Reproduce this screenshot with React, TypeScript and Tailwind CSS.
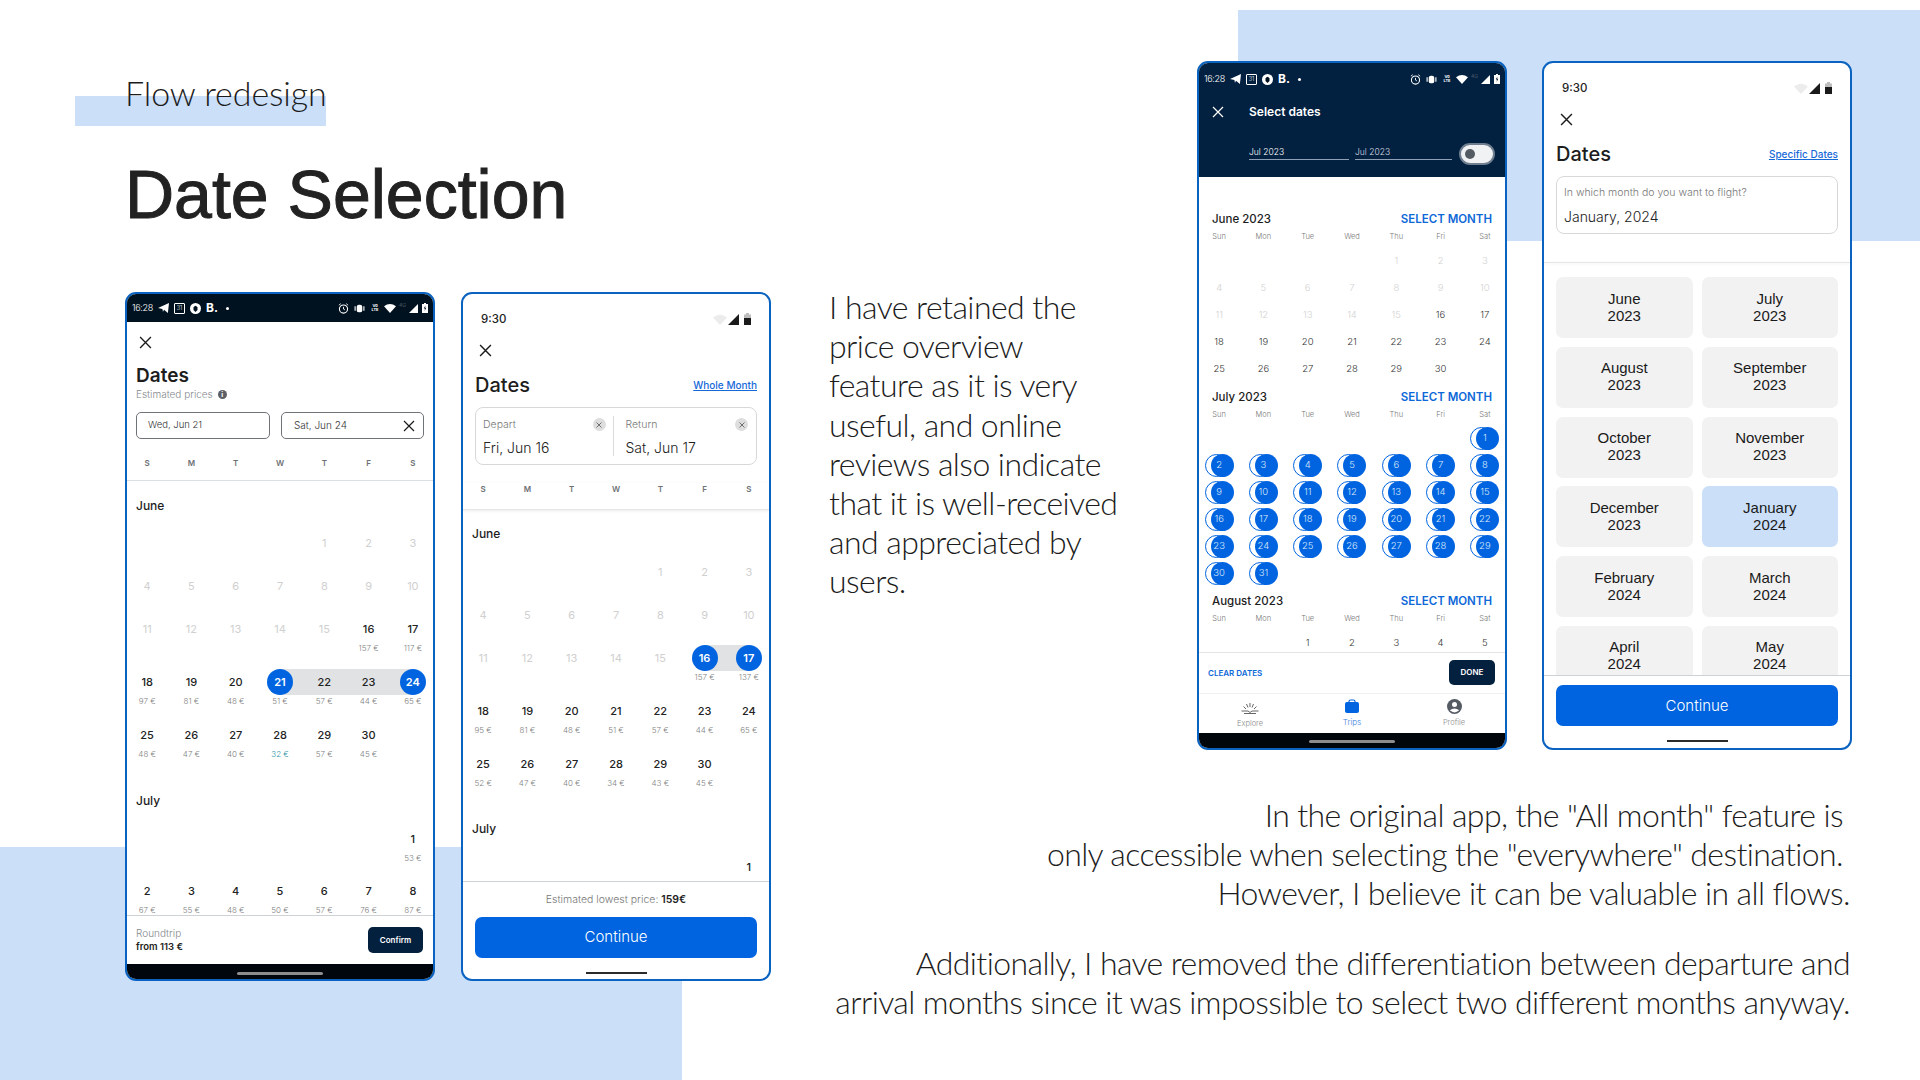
import React from "react";

type Cell = { d: number; p?: string; s?: "start" | "mid" | "end"; teal?: boolean; off?: boolean } | null;

const W1 = ["S", "M", "T", "W", "T", "F", "S"];
const W3 = ["Sun", "Mon", "Tue", "Wed", "Thu", "Fri", "Sat"];

function X({ size = 12, color = "#1a1a1a", sw = 1.3 }: { size?: number; color?: string; sw?: number }) {
  return (
    <svg width={size} height={size} viewBox="0 0 12 12" fill="none">
      <path d="M1 1L11 11M11 1L1 11" stroke={color} strokeWidth={sw} />
    </svg>
  );
}

function DarkStatus() {
  return (
    <div className="flex items-center justify-between pl-[5px] pr-[5px] h-full text-white">
      <div className="flex items-center">
        <span className="text-[9px] w-[22px] tracking-[-0.3px] whitespace-nowrap">16:28</span>
        <svg width="11" height="10" viewBox="0 0 10 9" className="ml-[4px]"><path d="M0 4.5L10 0L9 9L5.5 6L4.5 8L4 5.5Z" fill="white" /></svg>
        <div className="ml-[5px] w-[11px] h-[11px] border border-white rounded-[1px] text-[5.5px] leading-[9px] text-center">31</div>
        <svg width="11" height="11" viewBox="0 0 11 11" className="ml-[5px]"><circle cx="5.5" cy="5.5" r="5.5" fill="white" /><path d="M3.5 4.5Q5.5 1 7.5 4.5V7L5.5 9L3.5 7Z" fill="#00121f" /></svg>
        <span className="ml-[5px] text-[12px] font-bold leading-none">B.</span>
        <span className="ml-[8px] w-[3px] h-[3px] rounded-full bg-white" />
      </div>
      <div className="flex items-center">
        <svg width="11" height="11" viewBox="0 0 10 10" fill="none"><circle cx="5" cy="5.5" r="3.7" stroke="white" strokeWidth="1" /><path d="M5 3.5V5.5L6.3 6.3M0.8 2L2.5 0.6M9.2 2L7.5 0.6" stroke="white" strokeWidth="0.8" /></svg>
        <svg width="11" height="9" viewBox="0 0 10 8" className="ml-[5px]"><rect x="2.5" y="0.5" width="5" height="7" rx="2" fill="white" /><path d="M1 2V6M9 2V6" stroke="white" strokeWidth="1" /></svg>
        <div className="ml-[5px] w-[10px] text-[4px] leading-[4px] font-bold text-center">Vo<br />LTE</div>
        <svg width="12" height="10" viewBox="0 0 11 9" className="ml-[4px]"><path d="M0 3Q5.5-1.5 11 3L5.5 9Z" fill="white" /></svg>
        <span className="ml-[3px] w-[8px] text-[5px] text-[#6d7680] leading-none -mt-[5px]">4G</span>
        <svg width="9" height="9" viewBox="0 0 9 9" className="ml-[2px]"><path d="M9 0V9H0Z" fill="white" /></svg>
        <svg width="6" height="10" viewBox="0 0 6 10" className="ml-[4px]"><path d="M2 0H4V1H6V10H0V1H2Z" fill="white" /><path d="M3.4 2.5L1.8 5.5H3L2.6 8L4.3 4.8H3.1Z" fill="#00121f" /></svg>
      </div>
    </div>
  );
}

function LightStatus() {
  return (
    <div className="h-[46px] pt-[16px] pl-[18px] pr-[18px] flex items-start justify-between">
      <span className="text-[11.5px] leading-[18px] font-medium text-[#222]">9:30</span>
      <div className="flex items-center mt-[3px]">
        <svg width="14" height="11" viewBox="0 0 14 11"><path d="M0 3.5Q7-2 14 3.5L7 11Z" fill="#ececec" /></svg>
        <svg width="11" height="11" viewBox="0 0 11 11" className="ml-[1px]"><path d="M11 0V11H0Z" fill="#1a1a1a" /></svg>
        <svg width="7" height="12" viewBox="0 0 7 12" className="ml-[5px]"><path d="M2 0H5V1.5H7V5H0V1.5H2Z" fill="#bdbdbd" /><rect y="5" width="7" height="7" fill="#1a1a1a" /></svg>
      </div>
    </div>
  );
}

function LightHeader({ link, children }: { link: string; children: React.ReactNode }) {
  return (
    <div>
      <LightStatus />
      <div className="h-[20px] pl-[16px] flex items-center"><X size={13} sw={1.3} /></div>
      <div className="mt-[13px] px-[12px] flex items-center justify-between h-[24px]">
        <span className="text-[20px] font-medium text-[#1d1d1d]">Dates</span>
        <span className="text-[10px] font-medium text-[#1769d8] underline whitespace-nowrap">{link}</span>
      </div>
      <div className="mt-[10px] mx-[12px] h-[58px] border border-[#d8d8d8] rounded-[8px] flex">{children}</div>
    </div>
  );
}

function ClearDot() {
  return (
    <span className="w-[13px] h-[13px] rounded-full bg-[#dedede] flex items-center justify-center"><X size={6} color="#555" sw={1.6} /></span>
  );
}

function Weekdays({ labels, cls }: { labels: string[]; cls: string }) {
  return (
    <div className={`-mx-[2px] grid grid-cols-7 text-center ${cls}`}>
      {labels.map((l, i) => <span key={i}>{l}</span>)}
    </div>
  );
}

function Row({ cells, h }: { cells: Cell[]; h: string }) {
  return (
    <div className={`-mx-[2px] grid grid-cols-7 ${h}`}>
      {cells.map((c, i) => (
        <div key={i} className="flex flex-col items-center">
          {c && (
            <>
              <div className="relative w-full h-[20px] flex items-center justify-center">
                {c.s && (
                  <span className={`absolute -top-[3px] h-[26px] bg-[#e0e2e4] ${c.s === "start" ? "left-1/2 right-0" : c.s === "end" ? "left-0 right-1/2" : "left-0 right-0"}`} />
                )}
                {(c.s === "start" || c.s === "end") && (
                  <span className="absolute left-1/2 top-1/2 -translate-x-1/2 -translate-y-1/2 w-[26px] h-[26px] rounded-full bg-[#0064e0]" />
                )}
                <span className={`relative text-[11px] font-medium ${c.off ? "text-[#d0d0d0] font-normal" : c.s === "start" || c.s === "end" ? "text-white font-semibold" : "text-[#222]"}`}>{c.d}</span>
              </div>
              {c.p && <span className={`mt-[3px] h-[12px] leading-[12px] text-[8px] whitespace-nowrap ${c.teal ? "text-[#2c93a8]" : "text-[#7f7f7f]"}`}>{c.p}</span>}
            </>
          )}
        </div>
      ))}
    </div>
  );
}

const off = (a: (number | null)[]): Cell[] => a.map((d) => (d == null ? null : { d, off: true }));
const priced = (start: number, prices: (number | null)[], tealIdx = -1): Cell[] =>
  prices.map((p, i) => (p == null ? null : { d: start + i, p: `${p} €`, teal: i === tealIdx }));

function Phone({ children }: { children: React.ReactNode }) {
  return (
    <div className="w-[310px] h-[689px] shrink-0 bg-white border-2 border-[#0b63c1] rounded-[11px] overflow-hidden flex flex-col font-['Inter',sans-serif]">
      {children}
    </div>
  );
}

function PhoneOne() {
  const r3: Cell[] = [...off([11, 12, 13, 14, 15]), { d: 16, p: "157 €" }, { d: 17, p: "117 €" }];
  const r4 = priced(18, [97, 81, 48, 51, 57, 44, 65]);
  r4[3]!.s = "start"; r4[4]!.s = "mid"; r4[5]!.s = "mid"; r4[6]!.s = "end";
  return (
    <Phone>
      <div className="h-[28px] shrink-0 bg-[#00121f]"><DarkStatus /></div>
      <div className="flex-1 min-h-0 overflow-hidden">
        <div className="mt-[10px] h-[20px] pl-[12px] flex items-center"><X size={13} sw={1.2} /></div>
        <div className="mt-[12px] pl-[9px] h-[24px] leading-[24px] text-[19px] font-semibold text-[#1d1d1d]">Dates</div>
        <div className="pl-[9px] h-[12px] leading-[12px] text-[10px] text-[#85898d] flex items-center">
          Estimated prices
          <span className="ml-[5px] w-[9px] h-[9px] rounded-full bg-[#5c6066] text-white text-[7px] leading-[9px] text-center font-bold">i</span>
        </div>
        <div className="mt-[12px] px-[9px] flex gap-[11px]">
          <div className="flex-1 h-[27px] border border-[#6f7378] rounded-[5px] pl-[11px] flex items-center text-[9.5px] text-[#333]">Wed, Jun 21</div>
          <div className="flex-1 h-[27px] border border-[#6f7378] rounded-[5px] pl-[12px] pr-[8px] flex items-center justify-between text-[10px] text-[#333]">Sat, Jun 24<X size={12} sw={1.2} /></div>
        </div>
        <div className="mt-[18px] pb-[11px] border-b border-[#dcdfe2]">
          <Weekdays labels={W1} cls="h-[12px] leading-[12px] text-[8px] font-semibold text-[#6e7276]" />
        </div>
        <div className="mt-[17px] mb-[19px] pl-[9px] h-[16px] leading-[16px] text-[12px] font-medium text-[#1d1d1d]">June</div>
        <Row h="h-[43px]" cells={off([null, null, null, null, 1, 2, 3])} />
        <Row h="h-[43px]" cells={off([4, 5, 6, 7, 8, 9, 10])} />
        <Row h="h-[53px]" cells={r3} />
        <Row h="h-[53px]" cells={r4} />
        <Row h="h-[53px]" cells={priced(25, [48, 47, 40, 32, 57, 45, null], 3)} />
        <div className="mt-[15px] mb-[20px] pl-[9px] h-[16px] leading-[16px] text-[12px] font-medium text-[#1d1d1d]">July</div>
        <Row h="h-[52px]" cells={[null, null, null, null, null, null, { d: 1, p: "53 €" }]} />
        <Row h="h-[53px]" cells={priced(2, [67, 55, 48, 50, 57, 76, 87])} />
      </div>
      <div className="h-[49px] shrink-0 border-t border-[#cfd2d5] pl-[9px] pr-[10px] flex items-center justify-between">
        <div className="leading-[13px]">
          <div className="text-[10px] text-[#85898d]">Roundtrip</div>
          <div className="text-[9.5px] font-semibold text-[#222]">from 113 €</div>
        </div>
        <div className="w-[55px] h-[26px] bg-[#03213f] rounded-[5px] text-white text-[8px] font-semibold flex items-center justify-center">Confirm</div>
      </div>
      <div className="h-[15px] shrink-0 bg-[#00060c] flex items-center justify-center"><span className="w-[86px] h-[3px] rounded-full bg-[#8d8d8d] mt-[3px]" /></div>
    </Phone>
  );
}

function PhoneTwo() {
  const r3: Cell[] = [...off([11, 12, 13, 14, 15]), { d: 16, p: "157 €", s: "start" }, { d: 17, p: "137 €", s: "end" }];
  return (
    <Phone>
      <LightHeader link="Whole Month">
        <div className="flex-1 pl-[7px] pr-[7px] pt-[9px]">
          <div className="flex items-center justify-between text-[10.5px] text-[#777]">Depart<ClearDot /></div>
          <div className="mt-[7px] text-[14px] leading-[16px] text-[#222] whitespace-nowrap">Fri, Jun 16</div>
        </div>
        <div className="w-px my-[8px] bg-[#dcdcdc]" />
        <div className="flex-1 pl-[12px] pr-[8px] pt-[9px]">
          <div className="flex items-center justify-between text-[10.5px] text-[#777]">Return<ClearDot /></div>
          <div className="mt-[7px] text-[14px] leading-[16px] text-[#222] whitespace-nowrap">Sat, Jun 17</div>
        </div>
      </LightHeader>
      <div className="mt-[18px] pb-[14px] border-b border-[#e6e6e6] shadow-[0_1px_3px_rgba(0,0,0,0.08)]">
        <Weekdays labels={W1} cls="h-[12px] leading-[12px] text-[8px] font-semibold text-[#6e7276]" />
      </div>
      <div className="flex-1 min-h-0 overflow-hidden">
        <div className="mt-[16px] mb-[20px] pl-[9px] h-[16px] leading-[16px] text-[12px] font-medium text-[#1d1d1d]">June</div>
        <Row h="h-[43px]" cells={off([null, null, null, null, 1, 2, 3])} />
        <Row h="h-[43px]" cells={off([4, 5, 6, 7, 8, 9, 10])} />
        <Row h="h-[53px]" cells={r3} />
        <Row h="h-[53px]" cells={priced(18, [95, 81, 48, 51, 57, 44, 65])} />
        <Row h="h-[53px]" cells={priced(25, [52, 47, 40, 34, 43, 45, null])} />
        <div className="mt-[14px] mb-[20px] pl-[9px] h-[16px] leading-[16px] text-[12px] font-medium text-[#1d1d1d]">July</div>
        <Row h="h-[24px]" cells={[null, null, null, null, null, null, { d: 1 }]} />
      </div>
      <div className="shrink-0 border-t border-[#cfd2d5] px-[12px] pt-[12px] pb-[5px]">
        <div className="h-[12px] leading-[12px] text-[10.5px] text-center text-[#777]">Estimated lowest price: <span className="font-semibold text-[#222]">159€</span></div>
        <div className="mt-[11px] h-[41px] rounded-[7px] bg-[#0064e0] text-white text-[15px] flex items-center justify-center">Continue</div>
        <div className="mt-[14px] w-[61px] h-[2px] mx-auto bg-[#2a2a2a]" />
      </div>
    </Phone>
  );
}

function MonthHead({ name }: { name: string }) {
  return (
    <div className="pl-[13px] pr-[13px] h-[16px] flex items-center justify-between text-[11.5px] font-semibold">
      <span className="text-[#1d1d1d] font-medium">{name}</span>
      <span className="text-[#0d68d8]">SELECT MONTH</span>
    </div>
  );
}

function SmallRow({ cells }: { cells: (number | null)[] }) {
  return (
    <div className="-mx-[2px] grid grid-cols-7 h-[27px] items-center text-center text-[9.5px] text-[#333]">
      {cells.map((c, i) => <span key={i}>{c}</span>)}
    </div>
  );
}

function OffRow({ cells }: { cells: (number | null)[] }) {
  return (
    <div className="-mx-[2px] grid grid-cols-7 h-[27px] items-center text-center text-[9.5px]">
      {cells.map((c, i) => <span key={i}>{c}</span>)}
    </div>
  );
}

function MoonRow({ cells }: { cells: (number | null)[] }) {
  return (
    <div className="-mx-[2px] grid grid-cols-7 h-[27px] items-center text-center">
      {cells.map((c, i) => (
        <div key={i} className="relative h-[23px] flex items-center justify-center">
          {c != null && (
            <>
              <span className="absolute left-1/2 top-0 -ml-[14.5px] w-[23px] h-[23px] rounded-full border border-[#0064e0]" />
              <span className="absolute left-1/2 top-0 -ml-[8.5px] w-[23px] h-[23px] rounded-full bg-[#0064e0]" />
              <span className="relative text-[9.5px] text-[#dbe9fb]">{c}</span>
            </>
          )}
        </div>
      ))}
    </div>
  );
}

function PhoneThree() {
  const w = "mt-[1px] h-[10px] leading-[10px] text-[7.5px] text-[#777]";
  const seq = (a: number, b: number) => Array.from({ length: b - a + 1 }, (_, i) => a + i);
  return (
    <Phone>
      <div className="h-[114px] shrink-0 bg-[#02203f]">
        <div className="h-[32px]"><DarkStatus /></div>
        <div className="h-[34px] flex items-center text-white">
          <span className="ml-[13px] w-[37px]"><X size={12} color="white" sw={1.2} /></span>
          <span className="text-[12px] font-semibold">Select dates</span>
        </div>
        <div className="mt-[17px] pl-[50px] flex items-start text-[8.5px] text-[#d8dee6]">
          <div className="w-[100px] h-[14px] border-b border-[#8da0b5] text-white">Jul 2023</div>
          <div className="ml-[6px] w-[97px] h-[14px] border-b border-[#8da0b5]">Jul 2023</div>
          <div className="-mt-[3px] ml-[7px] w-[36px] h-[22px] rounded-full bg-[#f1f2f4] border-2 border-[#6f7f90] flex items-center pl-[4px]"><span className="w-[10px] h-[10px] rounded-full bg-[#555b63]" /></div>
        </div>
      </div>
      <div className="flex-1 min-h-0 overflow-hidden bg-white pt-[35px]">
        <MonthHead name="June 2023" />
        <div className="mt-[4px]"><Weekdays labels={W3} cls={w} /></div>
        <div className="mt-[6px]">
          <div className="text-[#d2d2d2]"><OffRow cells={[null, null, null, null, 1, 2, 3]} /><OffRow cells={seq(4, 10)} /></div>
          <div className="-mx-[2px] grid grid-cols-7 h-[27px] items-center text-center text-[9.5px]">
            {seq(11, 17).map((d) => <span key={d} className={d < 16 ? "text-[#d2d2d2]" : "text-[#333]"}>{d}</span>)}
          </div>
          <SmallRow cells={seq(18, 24)} />
          <SmallRow cells={[25, 26, 27, 28, 29, 30, null]} />
        </div>
        <div className="mt-[6.5px]"><MonthHead name="July 2023" /></div>
        <div className="mt-[4px]"><Weekdays labels={W3} cls={w} /></div>
        <div className="mt-[5.5px]">
          <MoonRow cells={[null, null, null, null, null, null, 1]} />
          <MoonRow cells={seq(2, 8)} />
          <MoonRow cells={seq(9, 15)} />
          <MoonRow cells={seq(16, 22)} />
          <MoonRow cells={seq(23, 29)} />
          <MoonRow cells={[30, 31, null, null, null, null, null]} />
        </div>
        <div className="mt-[7px]"><MonthHead name="August 2023" /></div>
        <div className="mt-[4px]"><Weekdays labels={W3} cls={w} /></div>
        <div className="mt-[6px]"><SmallRow cells={[null, null, 1, 2, 3, 4, 5]} /></div>
      </div>
      <div className="h-[41px] shrink-0 border-t border-[#e4e4e4] pl-[9px] pr-[10px] flex items-center justify-between">
        <span className="text-[8px] font-semibold text-[#0d68d8]">CLEAR DATES</span>
        <span className="w-[46px] h-[25px] rounded-[5px] bg-[#03213f] text-white text-[8px] font-semibold flex items-center justify-center -mt-[2px]">DONE</span>
      </div>
      <div className="h-[40px] shrink-0 border-t border-[#f1f1f1] grid grid-cols-3 text-[7.5px] text-center text-[#8a8a8a]">
        <div className="flex flex-col items-center pt-[8px]">
          <svg width="18" height="12" viewBox="0 0 18 12" fill="none" stroke="#555" strokeWidth="0.9"><path d="M9 1V5M5.5 2L7 5.5M12.5 2L11 5.5M2.5 4.5L5 7M15.5 4.5L13 7M0.5 9H7L9 10.5L11 9H17.5M3 11.5H15" /></svg>
          <span className="mt-[4px]">Explore</span>
        </div>
        <div className="flex flex-col items-center pt-[5px] text-[#3d82dc] text-[8px]">
          <svg width="14" height="14" viewBox="0 0 14 14"><path d="M4 4V2.5Q4 1 5.5 1H8.5Q10 1 10 2.5V4" fill="none" stroke="#0064e0" strokeWidth="1.2" /><rect y="3" width="14" height="11" rx="2" fill="#0064e0" /></svg>
          <span className="mt-[3px]">Trips</span>
        </div>
        <div className="flex flex-col items-center pt-[5px]">
          <svg width="15" height="15" viewBox="0 0 15 15"><circle cx="7.5" cy="7.5" r="7.5" fill="#555b63" /><circle cx="7.5" cy="5.5" r="2.5" fill="white" /><path d="M2.8 11.3Q7.5 7.5 12.2 11.3Q7.5 15.5 2.8 11.3Z" fill="white" /></svg>
          <span className="mt-[3px]">Profile</span>
        </div>
      </div>
      <div className="h-[15px] shrink-0 bg-[#00060c] flex items-center justify-center"><span className="w-[86px] h-[3px] rounded-full bg-[#8d8d8d] mt-[1px]" /></div>
    </Phone>
  );
}

const MONTHS: [string, string][] = [
  ["June", "2023"], ["July", "2023"], ["August", "2023"], ["September", "2023"], ["October", "2023"], ["November", "2023"],
  ["December", "2023"], ["January", "2024"], ["February", "2024"], ["March", "2024"], ["April", "2024"], ["May", "2024"],
];

function PhoneFour() {
  return (
    <Phone>
      <LightHeader link="Specific Dates">
        <div className="pl-[7px] pt-[9px]">
          <div className="text-[10.5px] leading-[14px] text-[#777] whitespace-nowrap">In which month do you want to flight?</div>
          <div className="mt-[9px] text-[14px] leading-[16px] text-[#222] whitespace-nowrap">January, 2024</div>
        </div>
      </LightHeader>
      <div className="mt-[28px] border-b border-[#e6e6e6] shadow-[0_1px_3px_rgba(0,0,0,0.08)]" />
      <div className="flex-1 min-h-0 overflow-hidden px-[12px] pt-[14px]">
        <div className="grid grid-cols-2 gap-x-[9px] gap-y-[8.75px]">
          {MONTHS.map(([m, y], i) => (
            <div key={m} className={`h-[61px] pb-[2px] rounded-[7px] flex flex-col items-center justify-center text-[15px] leading-[17px] text-[#1a1a1a] font-['Liberation_Sans',sans-serif] ${i === 7 ? "bg-[#cbdff8]" : "bg-[#f2f2f2]"}`}>
              <span>{m}</span>
              <span>{y}</span>
            </div>
          ))}
        </div>
      </div>
      <div className="shrink-0 border-t border-[#cfd2d5] px-[12px] pt-[9px] pb-[6px]">
        <div className="h-[41px] pt-[1px] rounded-[7px] bg-[#0064e0] text-white text-[15px] flex items-center justify-center">Continue</div>
        <div className="mt-[14px] w-[61px] h-[2px] mx-auto bg-[#2a2a2a]" />
      </div>
    </Phone>
  );
}

const LEFT_LINES = [
  "I have retained the",
  "price overview",
  "feature as it is very",
  "useful, and online",
  "reviews also indicate",
  "that it is well-received",
  "and appreciated by",
  "users.",
];

export default function App() {
  return (
    <div className="relative w-[1920px] h-[1080px] overflow-hidden bg-white text-[#1c1c1c] flex font-['Lato',sans-serif] font-light">
      <div className="absolute left-[1238px] top-[10px] right-0 h-[231px] bg-[#cbdff8]" />
      <div className="absolute left-0 top-[847px] w-[682px] bottom-0 bg-[#cbdff8]" />
      <div className="absolute left-[75px] top-[96px] w-[251px] h-[30px] bg-[#cbdff8]" />

      <div className="relative w-[771px] shrink-0 pl-[125px] pt-[73px]">
        <div className="h-[40px] leading-[40px] text-[34px] tracking-[-0.1px]">Flow redesign</div>
        <h1 className="mt-[43px] mb-[60px] h-[76px] leading-[76px] text-[68px] font-normal font-['Liberation_Sans',sans-serif] [-webkit-text-stroke:1px_#222] text-[#222]">Date Selection</h1>
        <div className="flex gap-[26px]">
          <PhoneOne />
          <PhoneTwo />
        </div>
      </div>

      <div className="relative flex-1 ml-[58px] pr-[68px] pt-[61px]">
        <div className="flex justify-between">
          <p className="mt-[226px] w-[320px] text-[32px] leading-[39.2px] tracking-[-0.55px] whitespace-nowrap">
            {LEFT_LINES.map((l) => <span key={l} className="block">{l}</span>)}
          </p>
          <div className="flex gap-[35px]">
            <PhoneThree />
            <PhoneFour />
          </div>
        </div>
        <div className="mt-[45px] pr-[2px] text-right text-[32px] leading-[39.2px] tracking-[-0.6px] whitespace-nowrap">
          <p>
            <span className="block pr-[7px]">In the original app, the "All month" feature is</span>
            <span className="block pr-[7px]">only accessible when selecting the "everywhere" destination.</span>
            <span className="block">However, I believe it can be valuable in all flows.</span>
          </p>
          <p className="mt-[30px]">
            <span className="block">Additionally, I have removed the differentiation between departure and</span>
            <span className="block">arrival months since it was impossible to select two different months anyway.</span>
          </p>
        </div>
      </div>
    </div>
  );
}
